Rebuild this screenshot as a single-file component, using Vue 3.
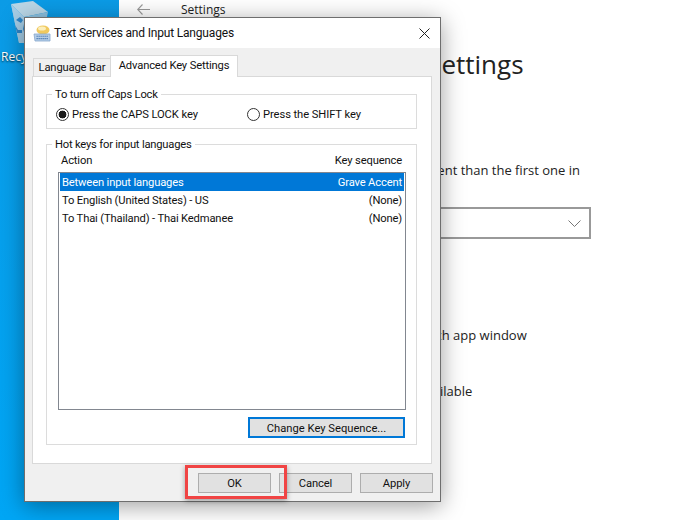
<template>
  <div class="screen">
    <!-- desktop strip on the left -->
    <div class="desktop">
      <svg class="bin" width="40" height="44" viewBox="0 0 40 44">
        <path d="M1 4 L23 1 L38 12 L14 17 Z" fill="#b9d6e6" />
        <path d="M1 4 L14 17 L38 12 L32 40 L9 43 Z" fill="#8fc3e2" />
        <path d="M1 4 L14 17 L18 43 L9 43 Z" fill="#a5cde6" />
        <path d="M6 20 L10 17 L13 20 L11 23 Z M5 25 L8 30 L12 30 L12 33 L7 33 Z M14 24 L17 27 L14 32 L13 29 Z" fill="#2f86c9" />
      </svg>
      <span class="bin-label">Recycle Bin</span>
    </div>

    <!-- settings window behind the dialog -->
    <div class="settings">
      <div class="settings-bar">
        <svg class="back" width="13" height="11" viewBox="0 0 13 11">
          <path d="M5.500 0.500 L0.700 5.500 L5.500 10.500 M0.700 5.500 H13" fill="none" stroke="#9a9a9a" stroke-width="1.100" />
        </svg>
        <span>Settings</span>
      </div>
      <div class="settings-body">
        <h1>Advanced keyboard settings</h1>
        <h2>Override for default input method</h2>
        <p class="para">If you want to use an input method that's different than the first one in your language list, choose it here.</p>
        <div class="select">
          <span>Use language list (Recommended)</span>
          <svg width="13" height="7" viewBox="0 0 13 7">
            <path d="M0.500 0.500 L6.500 6.500 L12.500 0.500" fill="none" stroke="#767676" stroke-width="1" />
          </svg>
        </div>
        <h2 class="switching">Switching input methods</h2>
        <p class="line first">Let me set a different input method for each app window</p>
        <p class="line second">Use the desktop language bar when it's available</p>
      </div>
    </div>

    <!-- the dialog -->
    <div class="dialog">
      <div class="titlebar">
        <svg width="18" height="17" viewBox="0 0 18 17">
          <ellipse cx="10" cy="5" rx="6.500" ry="4.500" fill="#f0c95f" />
          <ellipse cx="9" cy="3.500" rx="4" ry="2" fill="#fbeebb" />
          <path d="M1 9 H17 V16 H2 Z" fill="#b4cde8" stroke="#86a6cb" stroke-width="0.8" />
          <path d="M3.500 11.300 H15 M3.500 13.600 H15" stroke="#4a78ae" stroke-width="1.100" stroke-dasharray="1.300 0.700" />
        </svg>
        <span class="dialog-title">Text Services and Input Languages</span>
        <svg class="close" width="11" height="11" viewBox="0 0 11 11">
          <path d="M0.500 0.500 L10.500 10.500 M10.500 0.500 L0.500 10.500" stroke="#222" stroke-width="1" />
        </svg>
      </div>

      <div class="dialog-body">
        <div class="tabs">
          <div class="tab">Language Bar</div>
          <div class="tab active">Advanced Key Settings</div>
        </div>

        <div class="panel">
          <fieldset class="group caps">
            <legend>To turn off Caps Lock</legend>
            <div class="radios">
              <label class="radio first-radio"><span class="dot checked"></span>Press the CAPS LOCK key</label>
              <label class="radio"><span class="dot"></span>Press the SHIFT key</label>
            </div>
          </fieldset>

          <fieldset class="group hotkeys">
            <legend>Hot keys for input languages</legend>
            <div class="list-head">
              <span>Action</span>
              <span>Key sequence</span>
            </div>
            <div class="list">
              <div
                v-for="(row, i) in rows"
                :key="row.action"
                class="row"
                :class="{ selected: i === 0 }"
              >
                <span>{{ row.action }}</span>
                <span>{{ row.keys }}</span>
              </div>
            </div>
            <div class="change-wrap">
              <button class="btn change">Change Key Sequence...</button>
            </div>
          </fieldset>
        </div>

        <div class="footer">
          <button class="btn foot ok">OK</button>
          <button class="btn foot">Cancel</button>
          <button class="btn foot">Apply</button>
        </div>
      </div>
    </div>

    <!-- annotation box round the OK button -->
    <div class="highlight"></div>
  </div>
</template>

<script setup>
const rows = [
  { action: 'Between input languages', keys: 'Grave Accent' },
  { action: 'To English (United States) - US', keys: '(None)' },
  { action: 'To Thai (Thailand) - Thai Kedmanee', keys: '(None)' }
]
</script>

<style>
html,
body {
  margin: 0;
  background: #fff;
}
</style>

<style scoped>
.screen {
  position: relative;
  display: flex;
  width: 687px;
  height: 520px;
  overflow: hidden;
  font-family: Roboto, "Liberation Sans", Arial, sans-serif;
  font-size: 11.200px;
  letter-spacing: -0.15px;
  color: #111;
}

.desktop {
  width: 119px;
  flex-shrink: 0;
  background: linear-gradient(180deg, #0b9be6 0%, #00a6f5 100%);
  padding-left: 1px;
  box-sizing: border-box;
}

.bin {
  display: block;
  margin-left: 9px;
}

.bin-label {
  display: block;
  margin-top: 4px;
  color: #fff;
  font-family: "Open Sans", sans-serif;
  font-size: 12px;
  letter-spacing: 0;
  white-space: nowrap;
  text-shadow: 0 1px 2px rgba(0, 0, 0, 0.8);
}

.settings {
  flex: 1;
  background: #fff;
  font-family: "Open Sans", sans-serif;
  letter-spacing: 0;
  color: #222;
}

.settings-bar {
  display: flex;
  align-items: center;
  height: 18px;
  padding-left: 18px;
  font-size: 12px;
}

.back {
  margin-right: 31px;
}

.settings-body {
  padding-left: 41px;
  white-space: nowrap;
}

.settings-body h1 {
  margin: 26px 0 0 23px;
  font-size: 26px;
  font-weight: 400;
  line-height: 40px;
}

.settings-body h2 {
  margin: 50px 0 0;
  font-size: 16px;
  font-weight: 400;
  line-height: 22px;
}

.para {
  margin: 4px 0 0 -8px;
  font-size: 13px;
  line-height: 20px;
  width: 440px;
  white-space: normal;
}

.select {
  display: flex;
  align-items: center;
  justify-content: space-between;
  box-sizing: border-box;
  width: 431px;
  height: 32px;
  margin-top: 7px;
  padding: 0 8px;
  border: 2px solid #999;
  font-size: 13px;
}

.settings-body .switching {
  margin-top: 38px;
}

.line {
  margin: 0;
  font-size: 13px;
  line-height: 20px;
}

.line.first {
  margin: 26px 0 0 21px;
}

.line.second {
  margin: 36px 0 0 18px;
}

.dialog {
  position: absolute;
  left: 24px;
  top: 17px;
  box-sizing: border-box;
  width: 417px;
  height: 485px;
  display: flex;
  flex-direction: column;
  background: #f0f0f0;
  border: 1px solid #6e6e6e;
  box-shadow: 0 4px 22px rgba(0, 0, 0, 0.38);
}

.titlebar {
  display: flex;
  align-items: center;
  height: 30px;
  flex-shrink: 0;
  background: #fff;
  padding: 0 10px 0 8px;
}

.dialog-title {
  flex: 1;
  margin-left: 3px;
  font-size: 12px;
  letter-spacing: -0.18px;
}

.close {
  display: block;
}

.dialog-body {
  flex: 1;
  display: flex;
  flex-direction: column;
  padding: 7px 8px 0 7px;
}

.tabs {
  display: flex;
  align-items: flex-end;
  height: 21px;
  padding-left: 1px;
}

.tab {
  box-sizing: border-box;
  width: 78px;
  height: 19px;
  padding-top: 2px;
  margin-bottom: -1px;
  text-align: center;
  background: #f0f0f0;
  border: 1px solid #d9d9d9;
  border-bottom: none;
  white-space: nowrap;
}

.tab.active {
  position: relative;
  z-index: 1;
  width: 128px;
  height: 22px;
  padding-top: 3px;
  margin-left: -1px;
  background: #fff;
}

.panel {
  box-sizing: border-box;
  height: 388px;
  background: #fff;
  border: 1px solid #d9d9d9;
  padding: 10px 14px 0 13px;
}

.group {
  box-sizing: border-box;
  margin: 0;
  padding: 0;
  min-width: 0;
  border: 1px solid #dcdcdc;
}

.group legend {
  padding: 1px 3px 0;
  margin-left: 5px;
  line-height: 14px;
  letter-spacing: -0.2px;
}

.caps {
  height: 42px;
}

.radios {
  display: flex;
  margin-top: 6px;
  padding-left: 9px;
  letter-spacing: -0.08px;
}

.radio {
  display: flex;
  align-items: center;
  gap: 3px;
}

.first-radio {
  width: 191px;
}

.dot {
  box-sizing: border-box;
  width: 13px;
  height: 13px;
  border: 1px solid #333;
  border-radius: 50%;
  background: #fff;
}

.dot.checked {
  background: radial-gradient(circle, #1a1a1a 0 3.600px, #fff 4.200px);
}

.hotkeys {
  height: 308px;
  margin-top: 8px;
}

.list-head {
  display: flex;
  justify-content: space-between;
  padding: 2px 14px 0 14px;
  line-height: 14px;
}

.list {
  box-sizing: border-box;
  height: 238px;
  margin: 4px 10px 0 11px;
  padding: 0 1px;
  background: #fff;
  border: 1px solid #828790;
}

.row {
  box-sizing: border-box;
  display: flex;
  justify-content: space-between;
  height: 18px;
  line-height: 18px;
  padding: 1px 2px 0;
}

.row.selected {
  background: #0078d7;
  color: #fff;
}

.change-wrap {
  display: flex;
  justify-content: flex-end;
  margin-top: 7px;
  padding-right: 11px;
}

.btn {
  box-sizing: border-box;
  margin: 0;
  padding: 0;
  background: #e1e1e1;
  border: 1px solid #adadad;
  font-family: inherit;
  font-size: 11.200px;
  letter-spacing: -0.1px;
  color: #111;
}

.change {
  width: 157px;
  height: 21px;
  padding-top: 1px;
  letter-spacing: 0;
  border: 2px solid #0078d7;
}

.footer {
  display: flex;
  justify-content: flex-end;
  gap: 8px;
  margin: 9px -1px 0 0;
}

.foot {
  width: 73px;
  height: 20px;
}

.highlight {
  position: absolute;
  left: 185px;
  top: 465px;
  box-sizing: border-box;
  width: 102px;
  height: 34px;
  border: 3px solid #f04444;
  box-shadow: 0 2px 5px rgba(0, 0, 0, 0.35);
}
</style>
